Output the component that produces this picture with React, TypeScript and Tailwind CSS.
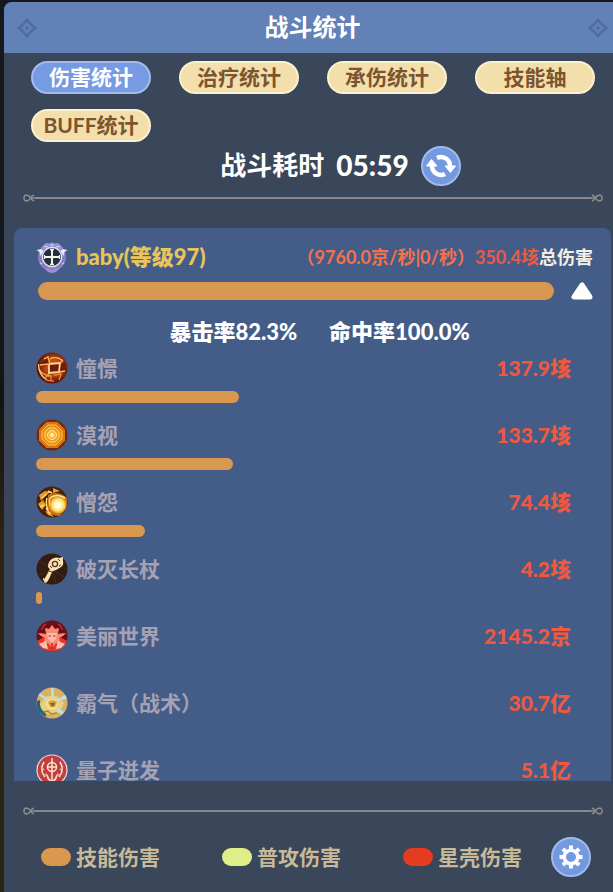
import clsx from "clsx";
import type { ReactNode } from "react";

const tabs = ["伤害统计", "治疗统计", "承伤统计", "技能轴", "BUFF统计"];

const legend = [
  { label: "技能伤害", color: "bg-[#da974e]" },
  { label: "普攻伤害", color: "bg-[#e0ee8a]" },
  { label: "星壳伤害", color: "bg-[#e53b20]" },
];

function Badge({ children }: { children: ReactNode }) {
  return (
    <svg viewBox="0 0 32 32" className="size-8 shrink-0" aria-hidden="true">
      {children}
    </svg>
  );
}

function CrestIcon() {
  return (
    <Badge>
      <circle cx="16" cy="16" r="12" fill="none" stroke="#8a7fc6" strokeWidth="4" />
      <path d="M5 7l5-5 4 1 2-2 2 2 4-1 5 5-4 2H9z" fill="#9d92d6" />
      <path d="M8 5l4 1M24 5l-4 1M14 4h4M4 22l2 1M28 22l-2 1" stroke="#d4cdf4" strokeWidth="1.2" />
      <path d="M.5 9l5-1 2 2-3 5-1-4zM31.500 9l-5-1-2 2 3 5 1-4z" fill="#e4ecf8" />
      <path d="M8 27l5 1 3 2 3-2 5-1-4 4-4 1-4-1z" fill="#9d92d6" />
      <circle cx="16" cy="16" r="9.600" fill="#222f3e" stroke="#e3e9ef" strokeWidth="1.3" />
      <path d="M16 8v16M8 16h16" stroke="#f3f7e6" strokeWidth="2" />
      <path d="M14 8.500h4M14 23.500h4M8.500 14v4M23.500 14v4" stroke="#f3f7e6" strokeWidth="1.3" />
      <path d="M16 13.500l2.500 2.500-2.500 2.500-2.500-2.500z" fill="#f3f7e6" />
    </Badge>
  );
}

function LongingIcon() {
  return (
    <Badge>
      <defs>
        <radialGradient id="longing-orb" cx="0.55" cy="0.45">
          <stop offset="0" stopColor="#d8621f" />
          <stop offset="0.6" stopColor="#b24414" />
          <stop offset="1" stopColor="#5d1508" />
        </radialGradient>
      </defs>
      <circle cx="16" cy="16" r="15.5" fill="url(#longing-orb)" />
      <path d="M13 12l11-1-1 9-10 1z" fill="#6c1e0a" stroke="#ffd694" strokeWidth="1.8" />
      <path d="M5 11l6-5 2 6-6 3zM25 12l4-2 1 8-6 2z" fill="#6c1e0a" />
      <g fill="none" stroke="#ffb45a" strokeWidth="1.3">
        <path d="M8 7l4-2 2 7M4 13l9-1M14 7q5-3 12 1M24 11l3-3M3 17q3 6 11 7M13 21l-1 2M23 20l6-1" />
        <path d="M10 24v4l5 1v-5zM18 23l7-1-2 6M5 22q5 8 13 7" stroke="#f08a34" />
        <path d="M2.500 12q0 10 7 15" stroke="#ffc477" />
      </g>
    </Badge>
  );
}

function GazeIcon() {
  return (
    <Badge>
      <circle cx="16" cy="16" r="15.5" fill="#722812" />
      <path d="M10.500 3h11L29 10.500v11L21.500 29h-11L3 21.500v-11z" fill="#dc7410" />
      <path d="M12 6h8l6 6v8l-6 6h-8l-6-6v-8z" fill="#e98b16" stroke="#ffc64a" strokeWidth="1" />
      <path d="M13 9h6l4 4v6l-4 4h-6l-4-4v-6z" fill="#f39a22" stroke="#ffdb68" strokeWidth="1" />
      <circle cx="16" cy="16" r="4.500" fill="#ffb638" stroke="#ffec97" strokeWidth="1" />
      <circle cx="16" cy="16" r="2" fill="#fff3b8" />
    </Badge>
  );
}

function GrudgeIcon() {
  return (
    <Badge>
      <defs>
        <radialGradient id="grudge-core">
          <stop offset="0.3" stopColor="#fffde0" />
          <stop offset="0.7" stopColor="#ffdd5e" />
          <stop offset="1" stopColor="#e8931c" />
        </radialGradient>
      </defs>
      <circle cx="16" cy="16" r="15.5" fill="#45200b" />
      <path d="M12 9q10-5 19 3 1 12-8 18-9 0-12-8z" fill="#c67315" />
      <path d="M3 9l6-4 6 1-5 3-5 6zM17 2l7 3-7 2zM2 18l5-4 3 5-4 5zM9 25l5 1 4 5-6-2z" fill="#e99b2a" />
      <path d="M6 12l5-4M4 21l4-2M12 5l4 2M10 22l4 6M14 12q-2 6 2 12M11 12q-2 6 1 12" stroke="#ffdc7a" strokeWidth="1.4" fill="none" />
      <circle cx="22" cy="19" r="8.500" fill="url(#grudge-core)" />
      <path d="M14 12q7-5 15 0" stroke="#fff0a0" strokeWidth="1.5" fill="none" />
    </Badge>
  );
}

function StaffIcon() {
  return (
    <Badge>
      <circle cx="16" cy="16" r="15.5" fill="#321d12" />
      <path d="M16 16L4 8M16 16L3 22M16 16l12 8M16 16l4 14" stroke="#4a2b16" strokeWidth="1" />
      <path d="M8 29l1-4 5-9 3 1-4 9-3 4z" fill="#fbe0b4" />
      <path d="M7 25l5 2-1 2-4-2z" fill="#fbe0b4" />
      <path d="M12 14q0-7 6-9 2-1 5 0l4-1v4q1 4-2 6-4 3-8 4-3-1-5-4z" fill="#fbe0b4" />
      <circle cx="19" cy="11" r="2.600" fill="none" stroke="#5c3218" strokeWidth="1.3" />
      <path d="M22 6l2 2M23 13l2-1M13 18l3 1M14 13l2 2" stroke="#5c3218" strokeWidth="1" />
    </Badge>
  );
}

function WorldIcon() {
  return (
    <Badge>
      <circle cx="16" cy="16" r="15.5" fill="#680f17" />
      <path d="M1 21q3 10 15 10.500Q28 31 31 21l-7-4H8z" fill="#e5372d" />
      <path d="M9 8l4 1 3-4 3 4 4-1-1 6q5-1 8-1-3 4-7 5l2 7-5-2-4 5-4-5-5 2 2-7q-4-1-7-5 3 0 8 1z" fill="#f98a75" />
      <path d="M11 13h10l-1 6-4 4-4-4z" fill="#ffb9a4" />
      <path d="M3 24l7-3 2 8-5-1zM29 24l-7-3-2 8 5-1z" fill="#ffc0ae" />
      <path d="M6 10q0-4 4-6M26 10q0-4-4-6M16 23v7" stroke="#c42a28" strokeWidth="1.5" fill="none" />
      <path d="M12.500 16h2.500M17 16h2.500" stroke="#d85a48" strokeWidth="1.3" />
    </Badge>
  );
}

function TacticIcon() {
  return (
    <Badge>
      <circle cx="16" cy="16" r="15.5" fill="#dab065" />
      <path d="M.7 14l3-1 1 8 4 4 2 5Q1 27 .5 16z" fill="#1f6777" />
      <path d="M4 17l7-8 10 0 7 7-4 9-10 3-8-5z" fill="#e8d083" />
      <path d="M15 1h2.500l.5 10h-2.500zM4 6l9 7-1 1.500L2.500 8zM29 8l-9 5 1 1.500 10-3zM28 25l-8-6-1 1 6 8z" fill="#b7e2e6" />
      <circle cx="16" cy="17" r="6" fill="#f1dd90" />
      <path d="M12 15l3-1.500h3L21 15l-2 5h-5z" fill="#cfa040" />
      <path d="M14 16h5l-2.500 4z" fill="#80601f" />
      <path d="M7 25l5-1 3 3 6-1" stroke="#b98230" strokeWidth="1.6" fill="none" />
    </Badge>
  );
}

function QuantumIcon() {
  return (
    <Badge>
      <circle cx="16" cy="16" r="15" fill="#c33e43" stroke="#f6dcd2" strokeWidth="1.2" />
      <g fill="none" stroke="#fae5cf" strokeWidth="1.5">
        <path d="M16 4v24M11 13h10" />
        <circle cx="16" cy="13" r="4.500" />
        <path d="M8 8q-5 8 1 15M24 8q5 8-1 15M11 21q1 5 5 7 4-2 5-7" />
        <path d="M5 13l3 3M27 13l-3 3M7 22l4-2M25 22l-4-2" stroke="#ecaf92" />
      </g>
    </Badge>
  );
}

const skills = [
  { name: "憧憬", value: "137.9垓", width: 203, icon: <LongingIcon /> },
  { name: "漠视", value: "133.7垓", width: 197, icon: <GazeIcon /> },
  { name: "憎怨", value: "74.4垓", width: 109, icon: <GrudgeIcon /> },
  { name: "破灭长杖", value: "4.2垓", width: 6, icon: <StaffIcon /> },
  { name: "美丽世界", value: "2145.2京", width: 0, icon: <WorldIcon /> },
  { name: "霸气（战术）", value: "30.7亿", width: 0, icon: <TacticIcon /> },
  { name: "量子迸发", value: "5.1亿", width: 0, icon: <QuantumIcon /> },
];

function HeaderMark() {
  return (
    <svg viewBox="0 0 20 20" className="size-5" fill="none" stroke="#4f6c9f" aria-hidden="true">
      <path d="M10 1.500L13 5.500 14.500 7 18.500 10 14.500 13 13 14.500 10 18.500 7 14.500 5.500 13 1.500 10 5.500 7 7 5.500z" strokeWidth="2.400" strokeLinejoin="round" />
      <path d="M10 8v4M8 10h4" strokeWidth="1.500" />
    </svg>
  );
}

function Knot({ flip }: { flip?: boolean }) {
  return (
    <svg
      viewBox="0 0 12 8"
      className={clsx("h-2 w-3 shrink-0", flip && "-scale-x-100")}
      fill="none"
      stroke="#8b8b8f"
      strokeWidth="1.600"
      aria-hidden="true"
    >
      <path d="M5 1.500Q1 0 1 4t4 2.500Q6.500 6 7.500 4T11 1M5 1.500Q6.500 2 7.500 4T11 7M8 4h4" />
    </svg>
  );
}

function Divider() {
  return (
    <div className="ml-[19px] mr-[10px] flex items-center">
      <Knot />
      <div className="h-0.5 flex-1 bg-[#87878c]" />
      <Knot flip />
    </div>
  );
}

export default function App() {
  return (
    <div className="h-screen bg-linear-to-b from-[#15191d] from-30% via-[#161412] via-45% to-[#2a2415] to-60% pl-1 pt-0.5 font-['Lato','Noto_Sans_CJK_SC',sans-serif] text-[21px] leading-8 font-bold">
      <main className="flex h-full flex-col overflow-hidden rounded-tl-lg bg-[#3a4659]">
        <header className="flex h-[51px] shrink-0 items-center justify-between bg-[#6281b6] pr-[5px] pl-[13px]">
          <HeaderMark />
          <h1 className="pb-0.5 text-2xl text-white">战斗统计</h1>
          <HeaderMark />
        </header>

        <nav className="mt-2 grid grid-cols-4 gap-x-7 gap-y-[15px] pr-[18px] pl-[27px]">
          {tabs.map((tab, i) => (
            <button
              key={tab}
              type="button"
              className={clsx(
                "h-[33px] rounded-full border-2 pb-0.5 leading-7 whitespace-nowrap",
                i === 0
                  ? "border-[#a3bcf0] bg-[#769be2] text-white"
                  : "border-[#fdf0cc] bg-[#f3dfac] text-[#7c5530]"
              )}
            >
              {tab}
            </button>
          ))}
        </nav>

        <div className="mt-1 flex items-center justify-center gap-3 pl-16 text-white">
          <span className="pb-0.5 text-[26px]">战斗耗时</span>
          <span className="pb-0.5 text-[28px] font-black">05:59</span>
          <button
            type="button"
            aria-label="刷新"
            className="flex size-10 items-center justify-center rounded-full border-2 border-[#a3b9ea] bg-[#7399e0]"
          >
            <svg viewBox="0 0 32 32" className="size-8 shrink-0" aria-hidden="true">
              <path d="M12 8A9 9 0 0 1 25 16" fill="none" stroke="#fff" strokeWidth="4.500" />
              <path d="M20 24A9 9 0 0 1 7 16" fill="none" stroke="#fff" strokeWidth="4.500" />
              <path d="M20 16h10.500l-5 6.500zM1.500 16H12L6.500 9.500z" fill="#fff" stroke="#fff" strokeWidth="1" strokeLinejoin="round" />
            </svg>
          </button>
        </div>

        <div className="mt-2">
          <Divider />
        </div>

        <section className="mt-[26px] mr-0.5 ml-[10px] min-h-0 flex-1 overflow-hidden rounded-t-lg bg-[#445d88] pt-[13px]">
          <div className="flex items-center pr-[18px] pl-[22px]">
            <CrestIcon />
            <h2 className="ml-2 text-[22px] font-black text-[#e8c45a]">baby(等级97)</h2>
            <p className="ml-auto text-lg leading-8 whitespace-nowrap">
              <span className="text-[#f5714a]">（9760.0京/秒|0/秒）</span>
              <span className="text-[#ea5a45]">350.4垓</span>
              <span className="text-[#f3efe6]">总伤害</span>
            </p>
          </div>

          <div className="mt-[9px] flex items-center gap-[17px] pr-[18px] pl-6">
            <div className="h-[18px] flex-1 rounded-full bg-[#d9974f]" />
            <button type="button" aria-label="收起">
              <svg viewBox="0 0 22 18" className="h-[18px] w-[22px]" aria-hidden="true">
                <path d="M11 3L3 15h16z" fill="#fff" stroke="#fff" strokeWidth="5" strokeLinejoin="round" />
              </svg>
            </button>
          </div>

          <div className="mt-4 flex justify-center gap-8 pl-[14px] text-[22px] leading-8 font-black text-white">
            <span>暴击率82.3%</span>
            <span>命中率100.0%</span>
          </div>

          <ul className="mt-1 pr-10 pl-[22px]">
            {skills.map((skill) => (
              <li key={skill.name} className="h-[67px]">
                <div className="flex items-center gap-2">
                  {skill.icon}
                  <span className="text-[#a7a2b3]">{skill.name}</span>
                  <span className="ml-auto font-black text-[#f0593f]">{skill.value}</span>
                </div>
                {skill.width > 0 && (
                  <div className="mt-[7px] h-3 rounded-md bg-[#d9974f]" style={{ width: skill.width }} />
                )}
              </li>
            ))}
          </ul>
        </section>

        <div className="mt-[26px]">
          <Divider />
        </div>

        <footer className="mt-[22px] mb-[15px] flex items-center pr-[22px] pl-[37px]">
          <ul className="flex gap-[62px]">
            {legend.map((item) => (
              <li key={item.label} className="flex items-center gap-[5px] whitespace-nowrap text-[#c8b999]">
                <span className={clsx("h-[18px] w-[30px] rounded-full", item.color)} />
                {item.label}
              </li>
            ))}
          </ul>
          <button
            type="button"
            aria-label="设置"
            className="ml-auto flex size-10 shrink-0 items-center justify-center rounded-full border-2 border-[#a3b9ea] bg-[#7399e0]"
          >
            <svg viewBox="0 0 24 24" className="size-6 shrink-0" aria-hidden="true">
              <circle cx="12" cy="12" r="6.800" fill="none" stroke="#fff" strokeWidth="3.600" />
              <path
                d="M12 .5v4M12 19.500v4M.5 12h4M19.500 12h4M3.900 3.900l2.800 2.800M17.300 17.300l2.800 2.800M3.900 20.100l2.800-2.800M17.300 6.700l2.800-2.800"
                stroke="#fff"
                strokeWidth="4"
              />
            </svg>
          </button>
        </footer>
      </main>
    </div>
  );
}
